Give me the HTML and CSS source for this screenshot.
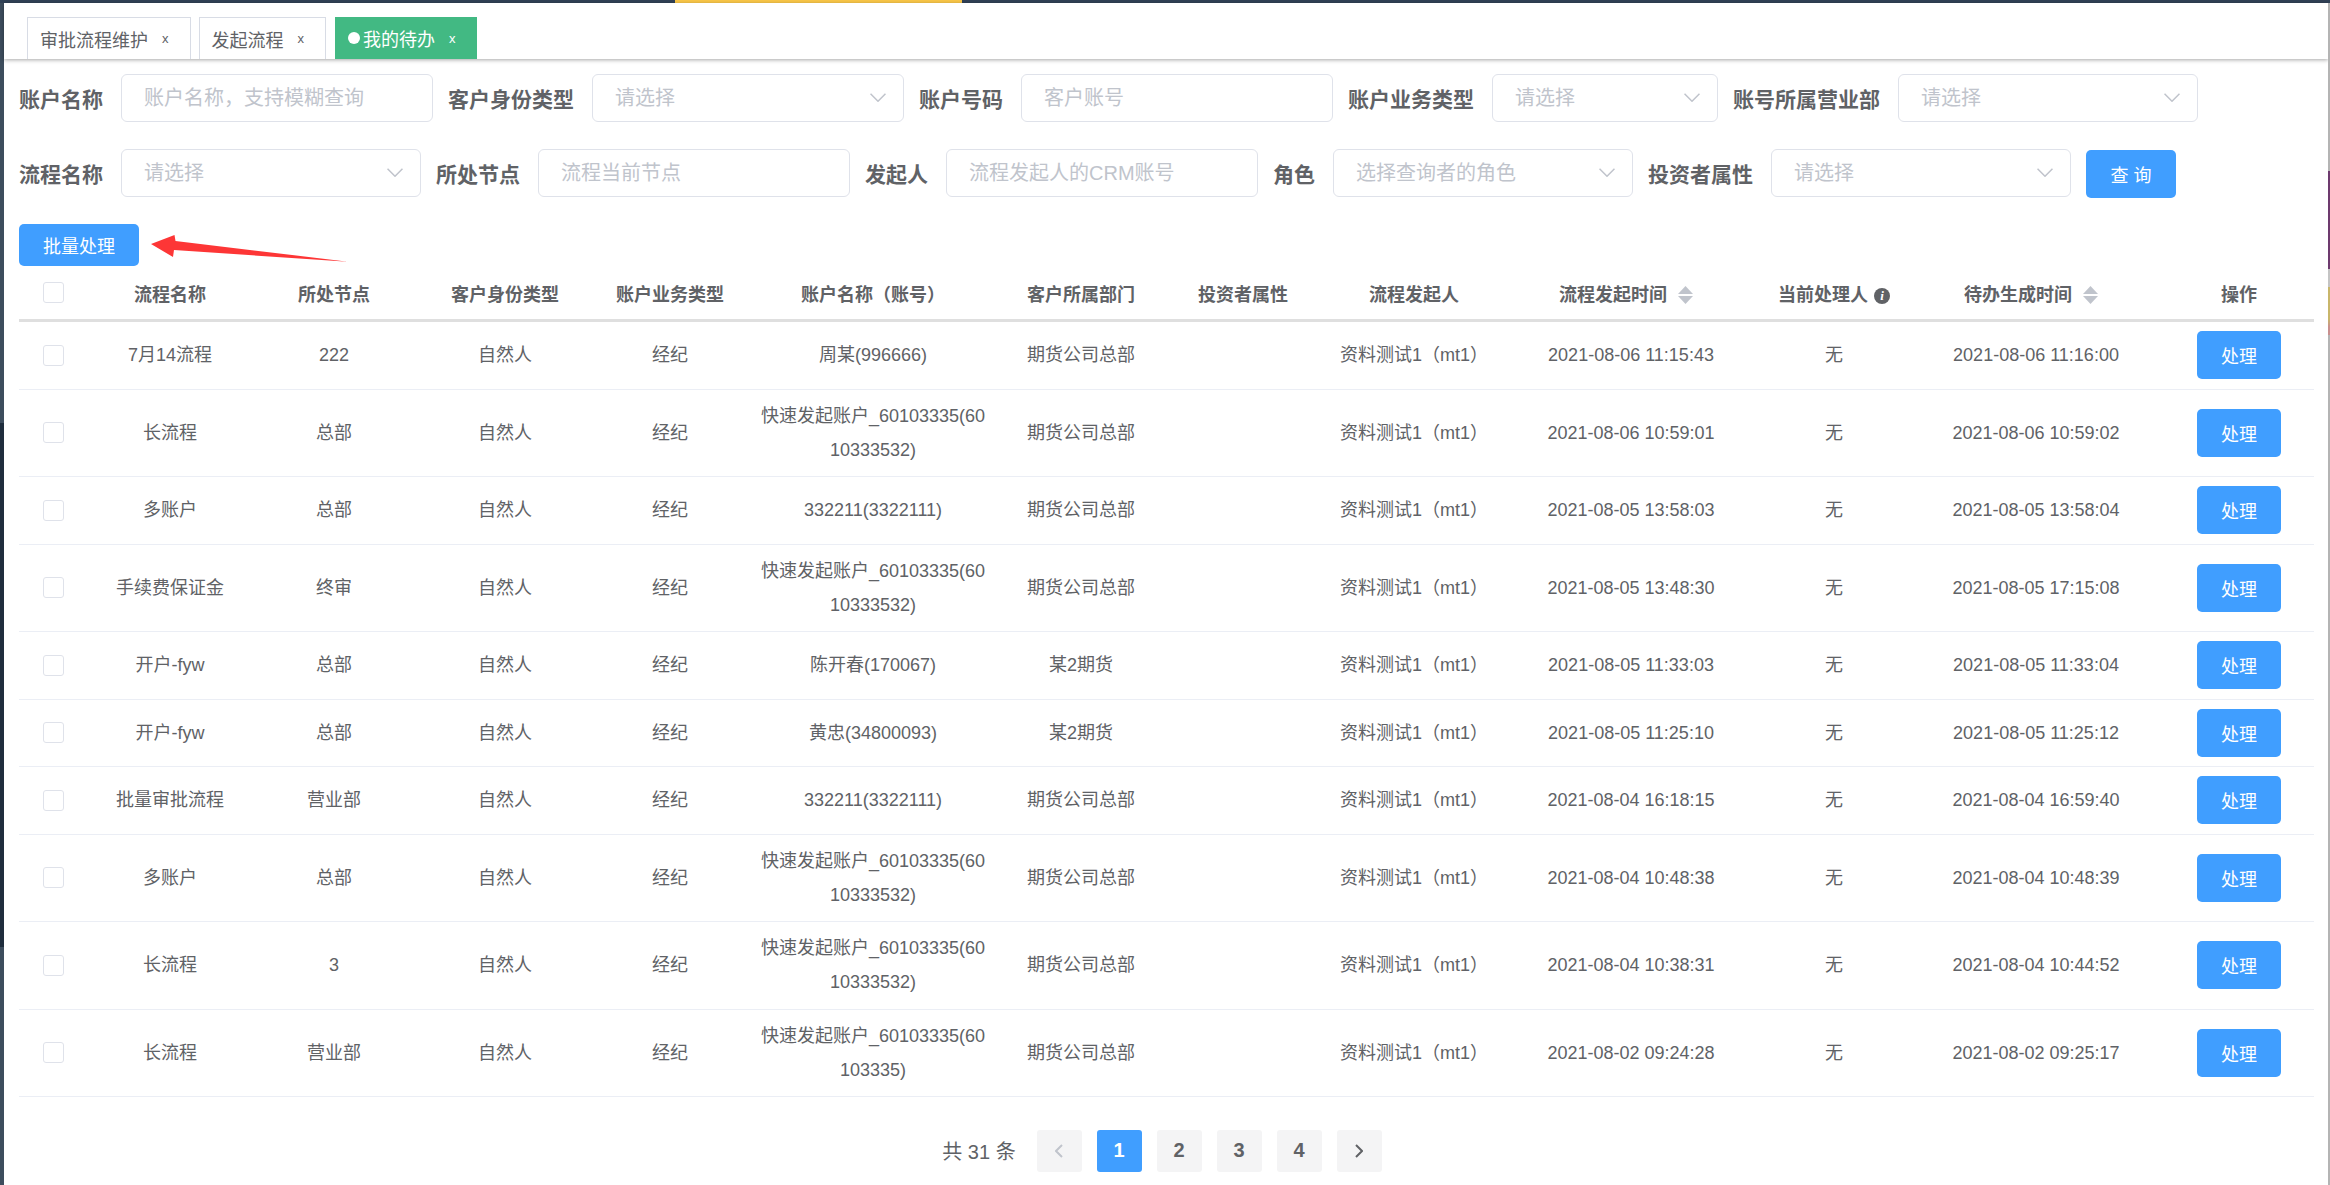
FILE: index.html
```html
<!DOCTYPE html>
<html lang="zh-CN">
<head>
    <meta charset="UTF-8" />
    <title>我的待办</title>
    <link rel="stylesheet" href="styles.css">
</head>
<body>
    <div class="topbar"></div>
    <div class="shell">
        <div class="edge-left"></div>
        <div class="content">
            <div class="tabs">
                <div class="tab"><span>审批流程维护</span><span class="tab-close">x</span></div>
                <div class="tab"><span>发起流程</span><span class="tab-close">x</span></div>
                <div class="tab tab-active"><span class="tab-dot"></span><span>我的待办</span><span class="tab-close">x</span></div>
            </div>

            <div class="filters">
                <div class="filter-row">
                    <label class="filter-label">账户名称</label>
                    <div class="field w-input"><input placeholder="账户名称，支持模糊查询" /></div>
                    <label class="filter-label">客户身份类型</label>
                    <div class="field w-input"><input placeholder="请选择" /><svg class="chevron" viewBox="0 0 15 8"><polyline points="0.5,0.5 7.5,7.5 14.5,0.5" /></svg></div>
                    <label class="filter-label">账户号码</label>
                    <div class="field w-input"><input placeholder="客户账号" /></div>
                    <label class="filter-label">账户业务类型</label>
                    <div class="field w-small"><input placeholder="请选择" /><svg class="chevron" viewBox="0 0 15 8"><polyline points="0.5,0.5 7.5,7.5 14.5,0.5" /></svg></div>
                    <label class="filter-label">账号所属营业部</label>
                    <div class="field w-select"><input placeholder="请选择" /><svg class="chevron" viewBox="0 0 15 8"><polyline points="0.5,0.5 7.5,7.5 14.5,0.5" /></svg></div>
                </div>
                <div class="filter-row">
                    <label class="filter-label">流程名称</label>
                    <div class="field w-select"><input placeholder="请选择" /><svg class="chevron" viewBox="0 0 15 8"><polyline points="0.5,0.5 7.5,7.5 14.5,0.5" /></svg></div>
                    <label class="filter-label">所处节点</label>
                    <div class="field w-input"><input placeholder="流程当前节点" /></div>
                    <label class="filter-label">发起人</label>
                    <div class="field w-input"><input placeholder="流程发起人的CRM账号" /></div>
                    <label class="filter-label">角色</label>
                    <div class="field w-select"><input placeholder="选择查询者的角色" /><svg class="chevron" viewBox="0 0 15 8"><polyline points="0.5,0.5 7.5,7.5 14.5,0.5" /></svg></div>
                    <label class="filter-label">投资者属性</label>
                    <div class="field w-select"><input placeholder="请选择" /><svg class="chevron" viewBox="0 0 15 8"><polyline points="0.5,0.5 7.5,7.5 14.5,0.5" /></svg></div>
                    <button class="btn btn-search">查 询</button>
                </div>
            </div>

            <div class="batch-row">
                <button class="btn btn-batch">批量处理</button>
                <svg class="batch-arrow" viewBox="0 0 200 30"><polygon points="1,10 24.5,1 25.5,7 198,27.7 24,16 23,23" /></svg>
            </div>

            <table class="todo-table">
                <colgroup>
                    <col class="c-check"><col class="c-name"><col class="c-node"><col class="c-identity"><col class="c-business"><col class="c-account"><col class="c-dept"><col class="c-investor"><col class="c-starter"><col class="c-time"><col class="c-handler"><col class="c-time2"><col class="c-action">
                </colgroup>
                <thead>
                    <tr>
                        <th><span class="checkbox"></span></th>
                        <th>流程名称</th>
                        <th>所处节点</th>
                        <th>客户身份类型</th>
                        <th>账户业务类型</th>
                        <th class="cell-account">账户名称（账号）</th>
                        <th>客户所属部门</th>
                        <th>投资者属性</th>
                        <th>流程发起人</th>
                        <th class="th-sort">流程发起时间<svg class="sort" viewBox="0 0 15 18"><polygon points="7.5,0 15,8 0,8" /><polygon points="0,10 15,10 7.5,18" /></svg></th>
                        <th>当前处理人<span class="info">i</span></th>
                        <th class="th-sort">待办生成时间<svg class="sort" viewBox="0 0 15 18"><polygon points="7.5,0 15,8 0,8" /><polygon points="0,10 15,10 7.5,18" /></svg></th>
                        <th class="cell-action">操作</th>
                    </tr>
                </thead>
                <tbody>
                    <tr class="row">
                        <td><span class="checkbox"></span></td><td>7月14流程</td><td>222</td><td>自然人</td><td>经纪</td><td class="cell-account">周某(996666)</td><td>期货公司总部</td><td></td><td>资料测试1（mt1）</td><td>2021-08-06 11:15:43</td><td>无</td><td>2021-08-06 11:16:00</td><td class="cell-action"><button class="btn btn-row">处理</button></td>
                    </tr>
                    <tr class="row-wrap">
                        <td><span class="checkbox"></span></td><td>长流程</td><td>总部</td><td>自然人</td><td>经纪</td><td class="cell-account">快速发起账户_60103335(6010333532)</td><td>期货公司总部</td><td></td><td>资料测试1（mt1）</td><td>2021-08-06 10:59:01</td><td>无</td><td>2021-08-06 10:59:02</td><td class="cell-action"><button class="btn btn-row">处理</button></td>
                    </tr>
                    <tr class="row">
                        <td><span class="checkbox"></span></td><td>多账户</td><td>总部</td><td>自然人</td><td>经纪</td><td class="cell-account">332211(3322111)</td><td>期货公司总部</td><td></td><td>资料测试1（mt1）</td><td>2021-08-05 13:58:03</td><td>无</td><td>2021-08-05 13:58:04</td><td class="cell-action"><button class="btn btn-row">处理</button></td>
                    </tr>
                    <tr class="row-wrap">
                        <td><span class="checkbox"></span></td><td>手续费保证金</td><td>终审</td><td>自然人</td><td>经纪</td><td class="cell-account">快速发起账户_60103335(6010333532)</td><td>期货公司总部</td><td></td><td>资料测试1（mt1）</td><td>2021-08-05 13:48:30</td><td>无</td><td>2021-08-05 17:15:08</td><td class="cell-action"><button class="btn btn-row">处理</button></td>
                    </tr>
                    <tr class="row">
                        <td><span class="checkbox"></span></td><td>开户-fyw</td><td>总部</td><td>自然人</td><td>经纪</td><td class="cell-account">陈开春(170067)</td><td>某2期货</td><td></td><td>资料测试1（mt1）</td><td>2021-08-05 11:33:03</td><td>无</td><td>2021-08-05 11:33:04</td><td class="cell-action"><button class="btn btn-row">处理</button></td>
                    </tr>
                    <tr class="row">
                        <td><span class="checkbox"></span></td><td>开户-fyw</td><td>总部</td><td>自然人</td><td>经纪</td><td class="cell-account">黄忠(34800093)</td><td>某2期货</td><td></td><td>资料测试1（mt1）</td><td>2021-08-05 11:25:10</td><td>无</td><td>2021-08-05 11:25:12</td><td class="cell-action"><button class="btn btn-row">处理</button></td>
                    </tr>
                    <tr class="row">
                        <td><span class="checkbox"></span></td><td>批量审批流程</td><td>营业部</td><td>自然人</td><td>经纪</td><td class="cell-account">332211(3322111)</td><td>期货公司总部</td><td></td><td>资料测试1（mt1）</td><td>2021-08-04 16:18:15</td><td>无</td><td>2021-08-04 16:59:40</td><td class="cell-action"><button class="btn btn-row">处理</button></td>
                    </tr>
                    <tr class="row-wrap">
                        <td><span class="checkbox"></span></td><td>多账户</td><td>总部</td><td>自然人</td><td>经纪</td><td class="cell-account">快速发起账户_60103335(6010333532)</td><td>期货公司总部</td><td></td><td>资料测试1（mt1）</td><td>2021-08-04 10:48:38</td><td>无</td><td>2021-08-04 10:48:39</td><td class="cell-action"><button class="btn btn-row">处理</button></td>
                    </tr>
                    <tr class="row-wrap">
                        <td><span class="checkbox"></span></td><td>长流程</td><td>3</td><td>自然人</td><td>经纪</td><td class="cell-account">快速发起账户_60103335(6010333532)</td><td>期货公司总部</td><td></td><td>资料测试1（mt1）</td><td>2021-08-04 10:38:31</td><td>无</td><td>2021-08-04 10:44:52</td><td class="cell-action"><button class="btn btn-row">处理</button></td>
                    </tr>
                    <tr class="row-wrap">
                        <td><span class="checkbox"></span></td><td>长流程</td><td>营业部</td><td>自然人</td><td>经纪</td><td class="cell-account">快速发起账户_60103335(60103335)</td><td>期货公司总部</td><td></td><td>资料测试1（mt1）</td><td>2021-08-02 09:24:28</td><td>无</td><td>2021-08-02 09:25:17</td><td class="cell-action"><button class="btn btn-row">处理</button></td>
                    </tr>
                </tbody>
            </table>

            <div class="pager">
                <span class="pager-total">共 31 条</span>
                <span class="page page-disabled"><svg class="page-arrow" viewBox="0 0 8 14"><polyline points="7,1 1,7 7,13" /></svg></span>
                <span class="page page-active">1</span>
                <span class="page">2</span>
                <span class="page">3</span>
                <span class="page">4</span>
                <span class="page"><svg class="page-arrow" viewBox="0 0 8 14"><polyline points="1,1 7,7 1,13" /></svg></span>
            </div>
        </div>
        <div class="edge-right"></div>
    </div>
</body>
</html>
```

FILE: styles.css
```css
:root {
    --primary-color: #409eff;
    --text-color: #606266;
    --placeholder-color: #c0c4cc;
    --border-color: #dfe2ea;
}

* {
    box-sizing: border-box;
}

body {
    margin: 0;
    height: 1185px;
    overflow: hidden;
    background-color: #fff;
    color: var(--text-color);
    font-family: "Liberation Sans", "Noto Sans CJK SC", sans-serif;
    font-size: 18px;
}

.topbar {
    height: 3px;
    background: linear-gradient(to right, #304156 675px, #fac748 675px, #fac748 962px, #304156 962px);
}

.shell {
    display: flex;
    height: 1182px;
}

.edge-left {
    width: 4px;
    background: linear-gradient(to bottom, #3d4d5d 420px, #1f2d3d 420px, #1f2d3d 944px, #3d4d5d 944px);
}

.edge-right {
    width: 2px;
    background: linear-gradient(to bottom, #b4b4b4 168px, #6d3a6e 168px, #6d3a6e 266px, #c4c4c4 266px, #c4c4c4 284px, #c9b66a 284px, #c9b66a 316px, #c9908f 324px, #c9908f 332px, #b4b4b4 332px);
}

.content {
    flex: 1;
    min-width: 0;
}

/* tabs */
.tabs {
    display: flex;
    gap: 8px;
    height: 56px;
    padding: 14px 0 0 23px;
    box-shadow: 0 1px 4px rgba(0,0,0,0.35);
}

.tab {
    display: flex;
    align-items: center;
    height: 42px;
    padding: 0 21px 0 12px;
    border: 1px solid #d8dce5;
    border-bottom: none;
    background-color: #fff;
}

.tab-close {
    margin-left: 14px;
    font-size: 13px;
}

.tab-active {
    padding-left: 13px;
    border: none;
    margin-left: 1px;
    background-color: #42b983;
    color: #fff;
}

.tab-dot {
    width: 12px;
    height: 12px;
    margin-right: 3px;
    border-radius: 50%;
    background-color: #fff;
}

/* filters */
.filters {
    padding: 15px 0 0 15px;
}

.filter-row {
    display: flex;
    align-items: center;
    height: 48px;
    margin-bottom: 27px;
}

.filter-label {
    margin-right: 18px;
    font-size: 21px;
    font-weight: 700;
    white-space: nowrap;
}

.field {
    position: relative;
    height: 48px;
    margin-right: 15px;
    border: 1px solid var(--border-color);
    border-radius: 6px;
}

.field input {
    width: 100%;
    height: 100%;
    padding: 0 40px 0 22px;
    border: none;
    border-radius: 6px;
    outline: none;
    background: transparent;
    color: var(--text-color);
    font-family: inherit;
    font-size: 20px;
}

.field input::placeholder {
    color: var(--placeholder-color);
    opacity: 1;
}

.w-input {
    width: 312px;
}

.w-select {
    width: 300px;
}

.w-small {
    width: 226px;
}

.chevron {
    position: absolute;
    top: 18px;
    right: 17px;
    width: 16px;
    height: 9px;
    fill: none;
    stroke: var(--placeholder-color);
    stroke-width: 1.4;
}

/* buttons */
.btn {
    padding: 0;
    border: none;
    border-radius: 5px;
    background-color: var(--primary-color);
    color: #fff;
    font-family: inherit;
    font-size: 18px;
}

.btn-search {
    width: 90px;
    height: 48px;
    margin-top: 2px;
}

.btn-batch {
    width: 120px;
    height: 42px;
}

.btn-row {
    width: 84px;
    height: 48px;
}

.batch-row {
    position: relative;
    height: 42px;
    margin-top: 1px;
    margin-left: 15px;
}

.batch-arrow {
    position: absolute;
    top: 10px;
    left: 131px;
    width: 200px;
    height: 30px;
    fill: #fd3636;
}

/* table */
.todo-table {
    width: 2295px;
    margin-left: 15px;
    border-collapse: separate;
    border-spacing: 0;
    table-layout: fixed;
}

.todo-table th {
    height: 56px;
    padding: 0;
    border-bottom: 3px solid #dfdfdf;
    font-weight: 700;
    text-align: center;
}

.todo-table td {
    padding: 0 10px;
    border-bottom: 1px solid #ebeef5;
    line-height: 34px;
    text-align: center;
}

.row {
    height: 67.6px;
}

.row-wrap {
    height: 87.4px;
}

.c-check { width: 68px; }
.c-name { width: 166px; }
.c-node { width: 162px; }
.c-identity { width: 180px; }
.c-business { width: 150px; }
.c-account { width: 250px; }
.c-dept { width: 172px; }
.c-investor { width: 152px; }
.c-starter { width: 190px; }
.c-time { width: 244px; }
.c-handler { width: 162px; }
.c-time2 { width: 242px; }
.c-action { width: 157px; }

.todo-table .cell-account {
    padding: 0 7px 0 13px;
    word-break: break-all;
}

.todo-table .cell-action {
    padding: 0 10px 0 17px;
}

.todo-table .th-sort {
    padding-right: 10px;
}

.checkbox {
    display: block;
    width: 21px;
    height: 21px;
    margin: 0 auto;
    border: 1px solid var(--border-color);
    border-radius: 3px;
    background-color: #fff;
}

.sort {
    width: 15px;
    height: 18px;
    margin-left: 11px;
    vertical-align: -3px;
    fill: var(--placeholder-color);
}

.info {
    display: inline-block;
    width: 16px;
    height: 16px;
    margin-left: 6px;
    border-radius: 50%;
    background-color: var(--text-color);
    color: #fff;
    font-family: "Liberation Serif", serif;
    font-size: 13px;
    font-style: italic;
    font-weight: 700;
    line-height: 16px;
    vertical-align: 1px;
}

/* pagination */
.pager {
    display: flex;
    justify-content: center;
    align-items: center;
    gap: 15px;
    margin-top: 33px;
    padding-right: 8px;
}

.pager-total {
    margin-right: 6px;
    font-size: 20px;
}

.page {
    display: flex;
    justify-content: center;
    align-items: center;
    width: 45px;
    height: 42px;
    border-radius: 3px;
    background-color: #f4f4f5;
    font-size: 20px;
    font-weight: 700;
}

.page-active {
    background-color: var(--primary-color);
    color: #fff;
}

.page-arrow {
    width: 8px;
    height: 14px;
    fill: none;
    stroke: var(--text-color);
    stroke-width: 2;
}

.page-disabled .page-arrow {
    stroke: var(--placeholder-color);
}
```
